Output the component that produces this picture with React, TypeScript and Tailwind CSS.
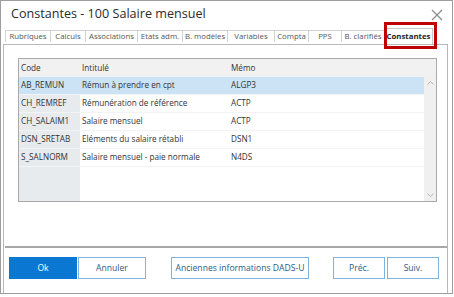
import React from "react";

const tabs = [
  { t: "Rubriques", w: "w-[45px]" },
  { t: "Calculs", w: "w-[35px]" },
  { t: "Associations", w: "w-[52px]" },
  { t: "Etats adm.", w: "w-[45px]" },
  { t: "B. modèles", w: "w-[45px]" },
  { t: "Variables", w: "w-[47px]" },
  { t: "Compta", w: "w-[34px]" },
  { t: "PPS", w: "w-[33px]" },
  { t: "B. clarifiés", w: "w-[43px]" },
];

const rows = [
  { code: "AB_REMUN", label: "Rémun à prendre en cpt", memo: "ALGP3" },
  { code: "CH_REMREF", label: "Rémunération de référence", memo: "ACTP" },
  { code: "CH_SALAIM1", label: "Salaire mensuel", memo: "ACTP" },
  { code: "DSN_SRETAB", label: "Eléments du salaire rétabli", memo: "DSN1" },
  { code: "S_SALNORM", label: "Salaire mensuel - paie normale", memo: "N4DS" },
];

function Btn({ label, primary, className }: { label: string; primary?: boolean; className: string }) {
  return (
    <button
      className={
        primary
          ? `${className} h-[22px] shrink-0 bg-[#0a78d2] text-white text-[8.6px] whitespace-nowrap`
          : `${className} h-[22px] shrink-0 bg-white border border-[#7fb3e0] text-[#2d5a86] text-[8.6px] whitespace-nowrap`
      }
    >
      {label}
    </button>
  );
}

export default function App() {
  return (
    <div
      className="w-[454px] h-[297px] bg-white text-[#333]"
      style={{ fontFamily: '"Open Sans", "Noto Sans", sans-serif' }}
    >
      <div className="w-[453px] h-[294px] border border-[#9d9d9d] flex flex-col">
        {/* title */}
        <div className="h-[27px] flex items-center justify-between pl-[10px] pr-[9px]">
          <span className="text-[12.6px] text-[#2b2b2b]">
            Constantes - 100 Salaire mensuel
          </span>
          <svg width="12" height="12" viewBox="0 0 12 12" className="mt-[1px]">
            <path d="M1 1L11 11M11 1L1 11" stroke="#8a8a8a" strokeWidth="1.2" />
          </svg>
        </div>

        {/* tabs */}
        <div className="h-[16px] flex pl-[4px] relative">
          {tabs.map((t) => (
            <div
              key={t.t}
              className={`${t.w} mt-[2px] h-[12px] flex items-center justify-center border-l border-t border-[#d2d2d2] text-[7.8px] text-[#555] leading-none whitespace-nowrap`}
            >
              {t.t}
            </div>
          ))}
          <div className="h-[16px] w-[49px] flex items-center justify-center border border-b-0 border-[#c8c8c8] bg-white text-[7.8px] font-bold text-[#222] leading-none">
            Constantes
          </div>
          <div className="absolute left-[383px] top-[-6px] w-[53px] h-[27px] border-[3px] border-[#c00000]" />
        </div>

        {/* body */}
        <div className="flex-1 ml-[2px] mr-[4px] border-l border-r border-t border-[#b8b8b8] flex flex-col">
          <div className="pl-[14px] pt-[13px]">
            <div className="w-[419px] h-[144px] border border-[#a9a9a9] flex flex-col text-[8.2px]">
              <div className="h-[18px] flex items-center bg-[#f1f1f1] shrink-0">
                <div className="w-[61px] pl-[2px]">Code</div>
                <div className="w-[150px] pl-[2px]">Intitulé</div>
                <div className="pl-[1px]">Mémo</div>
              </div>
              <div className="flex-1 flex">
                <div className="flex-1 flex">
                  <div className="w-[61px] bg-[#e8ebee] flex flex-col">
                    {rows.map((r, i) => (
                      <div
                        key={r.code}
                        className={`h-[18px] flex items-center pl-[2px] border-b border-[#f3f3f3] ${i === 0 ? "bg-[#cce3f5]" : ""}`}
                      >
                        {r.code}
                      </div>
                    ))}
                  </div>
                  <div className="flex-1 flex flex-col">
                    {rows.map((r, i) => (
                      <div
                        key={r.code}
                        className={`h-[18px] flex items-center border-b border-[#f3f3f3] ${i === 0 ? "bg-[#cce3f5]" : ""}`}
                      >
                        <div className="w-[150px] pl-[2px]">{r.label}</div>
                        <div className="pl-[1px]">{r.memo}</div>
                      </div>
                    ))}
                  </div>
                </div>
                <div className="w-[12px] bg-[#f0f0f0] flex flex-col items-center justify-between py-[4px]">
                  <svg width="7" height="4" viewBox="0 0 7 4">
                    <path d="M0.5 3.5L3.5 0.5L6.5 3.5" fill="none" stroke="#b5b5b5" />
                  </svg>
                  <svg width="7" height="4" viewBox="0 0 7 4">
                    <path d="M0.5 0.5L3.5 3.5L6.5 0.5" fill="none" stroke="#b5b5b5" />
                  </svg>
                </div>
              </div>
            </div>
          </div>
          <div className="mt-[44px] ml-[1px] h-[2px] bg-[#a8a8a8]" />
          <div className="flex items-start pl-[5px] pt-[9px]">
            <Btn label="Ok" primary className="w-[68px]" />
            <Btn label="Annuler" className="w-[68px] ml-[1px]" />
            <Btn label="Anciennes informations DADS-U" className="w-[138px] ml-[25px]" />
            <Btn label="Préc." className="w-[52px] ml-[24px]" />
            <Btn label="Suiv." className="w-[52px] ml-[2px]" />
          </div>
        </div>
      </div>
    </div>
  );
}
